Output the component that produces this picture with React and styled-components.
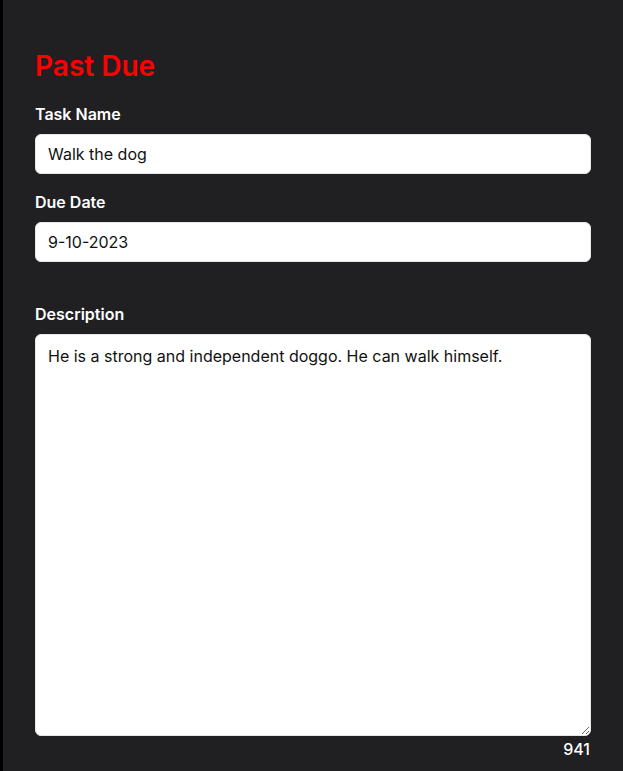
import React from "react";
import styled, { createGlobalStyle } from "styled-components";

const Global = createGlobalStyle`
  html, body { margin: 0; padding: 0; background: #202022; }
  body { font-family: Inter, "Noto Sans", sans-serif; }
  * { box-sizing: border-box; }
`;

const Page = styled.div`
  min-height: 771px;
  height: 771px;
  overflow: hidden;
  background: #202022;
  border-left: 3px solid #000;
  padding: 49px 32px 0 32px;
  display: flex;
  flex-direction: column;
`;

const Title = styled.h1`
  margin: 0 0 21px 0;
  font-size: 28px;
  line-height: 34px;
  font-weight: 600;
  color: #ff0000;
`;

const Field = styled.div`
  display: flex;
  flex-direction: column;
  margin-bottom: ${(p) => p.$gap || 0}px;
`;

const Label = styled.label`
  font-size: 16px;
  line-height: 20px;
  font-weight: 600;
  color: #ffffff;
  margin-bottom: 10px;
`;

const Input = styled.input`
  height: 40px;
  border: 1px solid #e5e7eb;
  border-radius: 6px;
  background: #fff;
  padding: 0 12px;
  font-family: Inter, sans-serif;
  font-size: 16px;
  color: #111;
  outline: none;
`;

const TextArea = styled.textarea`
  height: 402px;
  border: 1px solid #e5e7eb;
  border-radius: 6px;
  background: #fff;
  padding: 10px 12px;
  font-family: Inter, sans-serif;
  font-size: 16px;
  line-height: 22px;
  color: #111;
  outline: none;
  resize: vertical;
`;

const Count = styled.div`
  text-align: right;
  color: #fff;
  font-size: 16px;
  font-weight: 500;
  line-height: 20px;
  margin-top: 3px;
  padding-right: 1px;
`;

export default function App() {
  return (
    <>
      <Global />
      <Page>
        <Title>Past Due</Title>
        <Field $gap={18}>
          <Label>Task Name</Label>
          <Input defaultValue="Walk the dog" />
        </Field>
        <Field $gap={42}>
          <Label>Due Date</Label>
          <Input defaultValue="9-10-2023" />
        </Field>
        <Field>
          <Label>Description</Label>
          <TextArea defaultValue="He is a strong and independent doggo. He can walk himself." />
          <Count>941</Count>
        </Field>
      </Page>
    </>
  );
}
